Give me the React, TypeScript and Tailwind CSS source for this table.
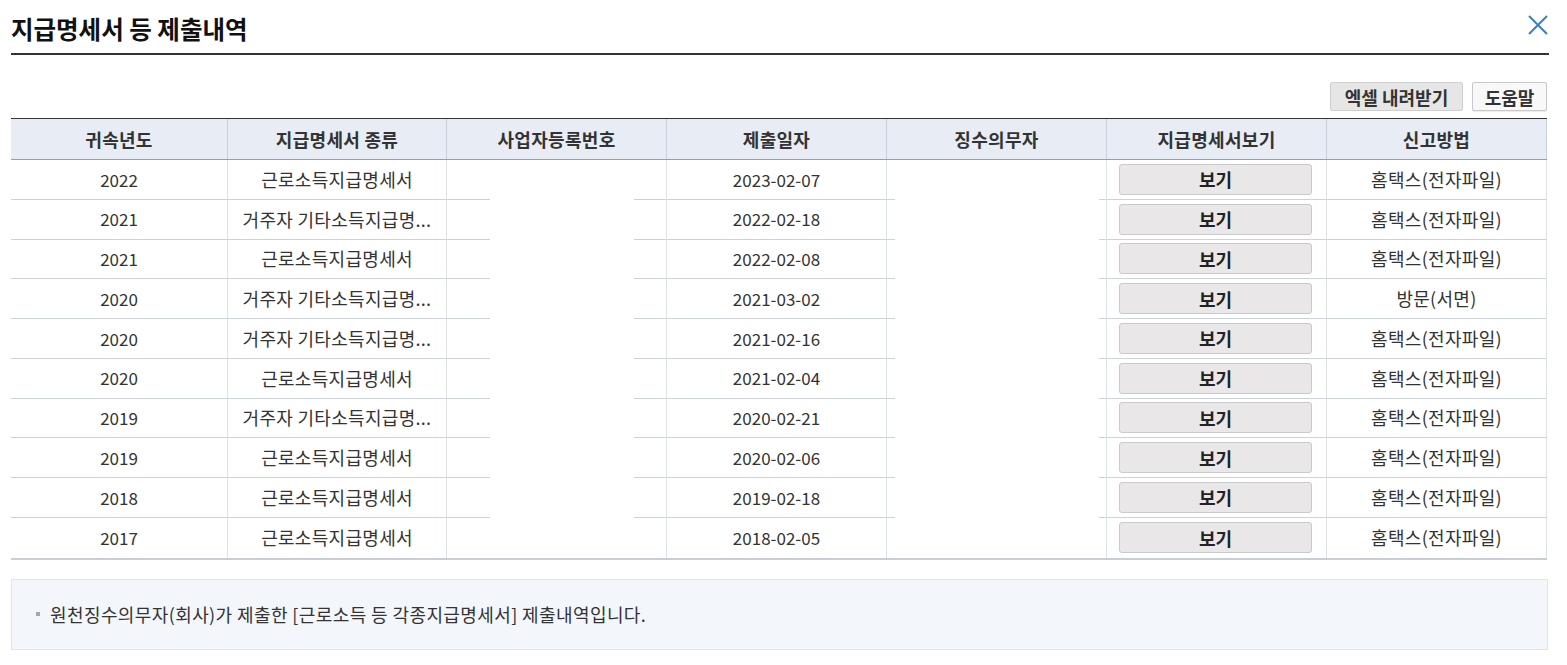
import React from "react";

const rows: [string, string, string, string][] = [
  ["2022", "근로소득지급명세서", "2023-02-07", "홈택스(전자파일)"],
  ["2021", "거주자 기타소득지급명...", "2022-02-18", "홈택스(전자파일)"],
  ["2021", "근로소득지급명세서", "2022-02-08", "홈택스(전자파일)"],
  ["2020", "거주자 기타소득지급명...", "2021-03-02", "방문(서면)"],
  ["2020", "거주자 기타소득지급명...", "2021-02-16", "홈택스(전자파일)"],
  ["2020", "근로소득지급명세서", "2021-02-04", "홈택스(전자파일)"],
  ["2019", "거주자 기타소득지급명...", "2020-02-21", "홈택스(전자파일)"],
  ["2019", "근로소득지급명세서", "2020-02-06", "홈택스(전자파일)"],
  ["2018", "근로소득지급명세서", "2019-02-18", "홈택스(전자파일)"],
  ["2017", "근로소득지급명세서", "2018-02-05", "홈택스(전자파일)"],
];

const headers = ["귀속년도", "지급명세서 종류", "사업자등록번호", "제출일자", "징수의무자", "지급명세서보기", "신고방법"];

const gridCols = "grid grid-cols-[217px_219px_220px_220px_220px_220px_220px]";

function Cell({ children, last, kr }: { children?: React.ReactNode; last: boolean; kr?: boolean }) {
  return (
    <div
      className={`flex items-center justify-center border-r border-[#dde2e8] ${last ? "" : "border-b border-b-[#cbd2dc]"} ${
        kr ? "text-[18px] tracking-[0.3px]" : "text-[17px]"
      }`}
    >
      {children}
    </div>
  );
}

function SplitCell({ left, gap, last }: { left: string; gap: string; last: boolean }) {
  return (
    <div className="flex flex-col border-r border-[#dde2e8]">
      <div className="flex-1" />
      {!last && (
        <div className="flex h-px">
          <div className={`${left} bg-[#cbd2dc]`} />
          <div className={gap} />
          <div className="flex-1 bg-[#cbd2dc]" />
        </div>
      )}
    </div>
  );
}

export default function App() {
  return (
    <div className="w-[1567px] h-[665px] bg-white text-[#333] font-['Noto_Sans_CJK_KR',sans-serif] overflow-hidden">
      <div className="ml-[11px] w-[1538px]">
        <div className="flex h-[55px] justify-between border-b-2 border-[#333]">
          <h1 className="mt-[12px] text-[24.5px] leading-[34px] font-bold text-[#111]">지급명세서 등 제출내역</h1>
          <svg className="mt-[14px]" width="22" height="22" viewBox="0 0 22 22">
            <path d="M2 2 L20 20 M20 2 L2 20" stroke="#3b7ec7" strokeWidth="2" fill="none" />
          </svg>
        </div>

        <div className="mt-[27px] flex justify-end gap-[9px] pr-[2px]">
          <button className="h-[29px] w-[133px] rounded-[2px] border border-[#cfcfcf] bg-[#e6e6e6] text-[18px] font-bold text-[#333] leading-none">엑셀 내려받기</button>
          <button className="h-[29px] w-[75px] rounded-[2px] border border-[#c8c8c8] bg-[#f8f8f8] text-[18px] font-bold text-[#333] leading-none shadow-[0_1px_1px_rgba(0,0,0,0.08)]">도움말</button>
        </div>

        <div className="mt-[7px] w-[1536px]">
          <div className={`${gridCols} h-[42px] border-t border-[#333] border-b border-b-[#9a9ea4] bg-[#e8edf5]`}>
            {headers.map((h) => (
              <div key={h} className="flex items-center justify-center border-r border-[#c8d0db] text-[18px] tracking-[0.3px] font-bold text-[#333]">
                {h}
              </div>
            ))}
          </div>
          <div className="border-b-2 border-[#c9ced6]">
            {rows.map((r, i) => {
              const last = i === rows.length - 1;
              return (
                <div key={i} className={`${gridCols} h-[39.75px]`}>
                  <Cell last={last}>{r[0]}</Cell>
                  <Cell last={last} kr>{r[1]}</Cell>
                  <SplitCell left="w-[43px]" gap="w-[144px]" last={last} />
                  <Cell last={last}>{r[2]}</Cell>
                  <SplitCell left="w-[8px]" gap="w-[204px]" last={last} />
                  <div className={`flex items-center border-r border-[#dde2e8] ${last ? "" : "border-b border-b-[#cbd2dc]"}`}>
                    <button className="ml-[12px] h-[31px] w-[193px] rounded-[3px] border border-[#cacaca] bg-[#e9e7e7] text-[18px] font-bold text-[#222] leading-none">보기</button>
                  </div>
                  <Cell last={last} kr>{r[3]}</Cell>
                </div>
              );
            })}
          </div>
        </div>

        <div className="mt-[19px] flex h-[71px] w-[1537px] items-center border border-[#dfe5ec] bg-[#f3f6fb] pl-[24px]">
          <span className="mr-[10px] h-[4px] w-[4px] bg-[#a8a8a8]" />
          <span className="text-[18px] tracking-[0.4px] text-[#333]">원천징수의무자(회사)가 제출한 [근로소득 등 각종지급명세서] 제출내역입니다.</span>
        </div>
      </div>
    </div>
  );
}
